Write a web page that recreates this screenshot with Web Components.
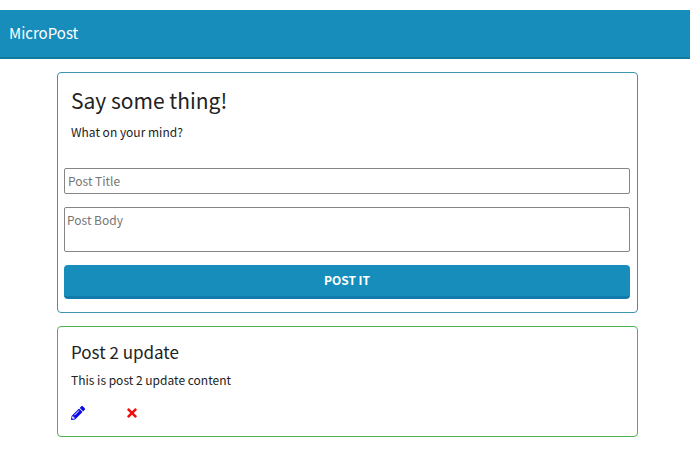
<!DOCTYPE html>
<html lang="en">
<head>
<meta charset="utf-8">
<title>MicroPost</title>
<style>
  body { margin: 0; padding-top: 10px; background: #fff; color: #222; font-family: "Noto Sans CJK SC", "Noto Sans", sans-serif; font-size: 12px; line-height: 20px; }
  main { display: grid; gap: 13px; padding: 13px 52px 32px 57px; }
</style>
</head>
<body>
<micro-nav>MicroPost</micro-nav>
<main>
  <post-card><post-form></post-form></post-card>
  <post-card kind="post"><post-item><span slot="title">Post 2 update</span><span slot="body">This is post 2 update content</span></post-item></post-card>
</main>

<script>
class ShadowElement extends HTMLElement {
  constructor() {
    super();
    const t = document.createElement('template');
    t.innerHTML = this.constructor.markup;
    this.attachShadow({ mode: 'open' }).append(t.content.cloneNode(true));
  }
}

class MicroNav extends ShadowElement {
  static markup = `
    <style>
      :host { display: block; }
      nav { display: flex; background: #178dbb; border-bottom: 2px solid #117a9f; padding: 11px 9px 12px; }
      a { color: #fff; text-decoration: none; font-size: 15px; line-height: 24px; }
    </style>
    <nav><a href="#"><slot></slot></a></nav>`;
}

class PostCard extends ShadowElement {
  static markup = `
    <style>
      :host { display: block; box-sizing: border-box; border: 1px solid #3c94ae; border-radius: 4px; }
      :host([kind="post"]) { border-color: #4fb254; }
    </style>
    <slot></slot>`;
}

class PostForm extends ShadowElement {
  static markup = `
    <style>
      :host { display: block; padding: 12px 7px 13px 6px; }
      header { padding: 0 7px; }
      h1 { margin: 0 0 7px; font-size: 21px; font-weight: 400; line-height: 30px; }
      p { margin: 0; }
      form { display: grid; gap: 13px; margin-top: 26px; }
      input, textarea { box-sizing: border-box; width: 100%; margin: 0; border: 1px solid #858585; border-radius: 2px; background: #fff; font: inherit; color: #222; }
      input { height: 26px; padding: 0 3px 2px; }
      textarea { display: block; height: 45px; padding: 2px; resize: none; }
      ::placeholder { color: #757575; opacity: 1; }
      button { height: 34px; padding: 0 0 1px; border: 0; border-bottom: 3px solid #117cab; border-radius: 4px; background: #178dbb; color: #fff; font: inherit; font-weight: 700; }
    </style>
    <header><h1>Say some thing!</h1><p>What on your mind?</p></header>
    <form>
      <input type="text" placeholder="Post Title" aria-label="Post Title">
      <textarea placeholder="Post Body" aria-label="Post Body"></textarea>
      <button type="button">POST IT</button>
    </form>`;
}

class PostItem extends ShadowElement {
  static markup = `
    <style>
      :host { display: block; padding: 12px 13px 16px; }
      h2 { margin: 0 0 6px; font-size: 17px; font-weight: 400; line-height: 25px; }
      p { margin: 0; }
      div { display: flex; gap: 42px; margin-top: 16px; }
      a { display: flex; }
      svg { display: block; height: 14px; }
      .edit { color: #0b0be8; }
      .delete { color: #f01010; }
    </style>
    <h2><slot name="title"></slot></h2>
    <p><slot name="body"></slot></p>
    <div>
      <a class="edit" href="#" aria-label="Edit post"><svg width="14" viewBox="0 0 512 512" fill="currentColor"><path d="M497.900 142.100l-46.100 46.100c-4.700 4.700-12.300 4.700-17 0l-111-111c-4.700-4.700-4.700-12.300 0-17l46.100-46.100c18.700-18.700 49.100-18.700 67.900 0l60.100 60.100c18.800 18.700 18.800 49.100 0 67.900zM284.200 99.800L21.600 362.400.4 483.900c-2.900 16.400 11.400 30.600 27.800 27.800l121.500-21.300 262.600-262.600c4.700-4.700 4.700-12.300 0-17l-111-111c-4.800-4.700-12.400-4.700-17.100 0zM124.100 339.900c-5.500-5.500-5.500-14.300 0-19.800l154-154c5.500-5.500 14.300-5.500 19.800 0s5.500 14.300 0 19.800l-154 154c-5.500 5.500-14.300 5.500-19.800 0zM88 424h48v36.300l-64.500 11.300-31.100-31.100L51.700 376H88v48z"/></svg></a>
      <a class="delete" href="#" aria-label="Delete post"><svg width="10" viewBox="0 0 352 512" fill="currentColor"><path d="M242.700 256l100.100-100.100c12.300-12.300 12.300-32.200 0-44.500l-22.200-22.200c-12.300-12.300-32.200-12.300-44.500 0L176 189.300 75.900 89.200c-12.300-12.300-32.200-12.300-44.500 0L9.200 111.400c-12.300 12.300-12.300 32.200 0 44.500L109.300 256 9.200 356.100c-12.300 12.300-12.300 32.200 0 44.500l22.200 22.200c12.300 12.300 32.200 12.300 44.500 0L176 322.700l100.100 100.100c12.300 12.300 32.200 12.300 44.500 0l22.200-22.200c12.300-12.300 12.300-32.200 0-44.500L242.700 256z"/></svg></a>
    </div>`;
}

customElements.define('micro-nav', MicroNav);
customElements.define('post-card', PostCard);
customElements.define('post-form', PostForm);
customElements.define('post-item', PostItem);
</script>
</body>
</html>
